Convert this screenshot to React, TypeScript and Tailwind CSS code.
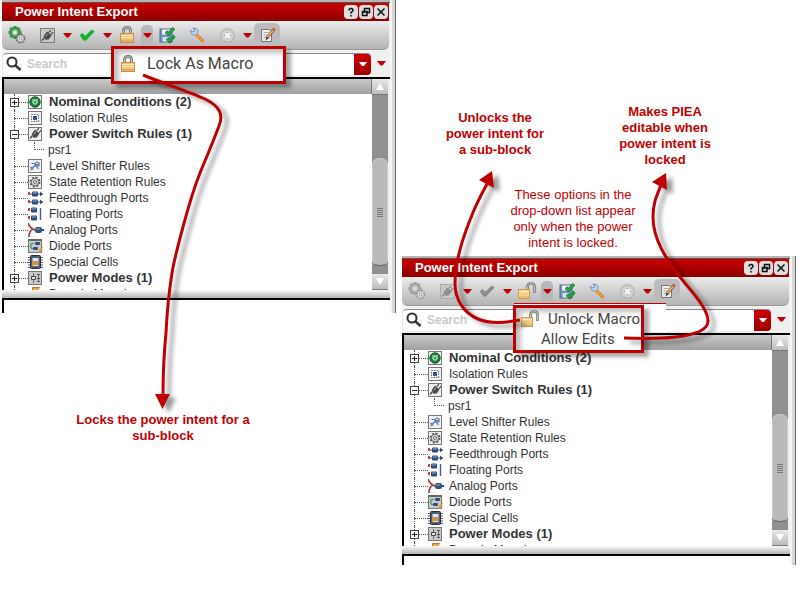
import React from "react";

type IconProps = { muted?: boolean };

function Gears({ muted }: IconProps) {
  return (
    <svg className="size-[18px]" viewBox="0 0 18 18" aria-hidden="true">
      <path d="M5.500 0h3l.5 1.500 1.800-.6 1.800 1.800-.8 1.600 1.700.7v3l-1.700.6.8 1.600-1.800 1.800-1.800-.8-.5 1.800h-3L5 11.200l-1.800.8-1.900-1.800.9-1.600L.5 8V5l1.700-.7-.9-1.600L3.200.9 5 1.500z" fill={muted ? "#a2a2a2" : "#3c8f4d"} />
      <circle cx="7" cy="6.500" r="3.600" fill={muted ? "#bcbcbc" : "#6ab878"} />
      <circle cx="7" cy="6.500" r="2" fill={muted ? "#dcdcdc" : "#e4eee4"} />
      <circle cx="12.500" cy="12.500" r="4" fill="none" stroke={muted ? "#9a9a9a" : "#6d6d6d"} strokeWidth="2" strokeDasharray="1.800 1.340" />
      <circle cx="12.500" cy="12.500" r="3.600" fill="#dedede" stroke={muted ? "#a2a2a2" : "#7d7d7d"} strokeWidth=".8" />
      <circle cx="12.500" cy="12.500" r="1.400" fill="#fff" stroke="#888" strokeWidth=".8" />
    </svg>
  );
}

function Plug({ muted }: IconProps) {
  const c = muted ? "#8c8c8c" : "#4a4a4a";
  return (
    <g>
      <path d="M2 12.500 4.500 9.500" stroke={c} strokeWidth="1.400" />
      <path d="M3.600 8 7 3.600l4.600 3.800-3 4-3.200.4z" fill={c} />
      <path d="M8.500 4.600 11 2.200M10.800 6.600l2.400-2.300" stroke={c} strokeWidth="1.200" />
      <path d="M5.800 8.400 8 5.600" stroke="#aaa" strokeWidth="1" />
    </g>
  );
}

function PlugTool({ muted }: IconProps) {
  return (
    <svg className="size-[15px]" viewBox="0 0 15 15" aria-hidden="true">
      <rect x=".5" y=".5" width="14" height="14" fill="#c9c9c9" stroke={muted ? "#aaa" : "#7d7d7d"} />
      <Plug muted={muted} />
    </svg>
  );
}

function Check({ muted }: IconProps) {
  return (
    <svg className="size-4" viewBox="0 0 16 16" aria-hidden="true">
      <path d="M.8 8.600 3.200 6 6.200 8.800 13 2.600 15.600 4.600 6.800 13.800 4.400 13.400z" fill={muted ? "#8b8b8b" : "#12b32a"} />
    </svg>
  );
}

function Lock({ open }: { open?: boolean }) {
  return open ? (
    <svg className="h-[18px] w-[20px] shrink-0" viewBox="0 0 20 18" aria-hidden="true">
      <path d="M10.500 9V4.500q0-3 3.500-3t3.500 3V11" fill="none" stroke="#777" strokeWidth="2.600" />
      <path d="M10.500 8.500V4.500q0-3 3.500-3t3.500 3v6" fill="none" stroke="#c4c4c4" strokeWidth="1" />
      <rect x="1.500" y="7.500" width="11" height="9" fill="#f3cf8c" stroke="#d49b4b" />
      <path d="M2 9.500h10" stroke="#fff0c8" />
      <path d="M2 15h10" stroke="#e2ac5b" />
    </svg>
  ) : (
    <svg className="h-[18px] w-[16px] shrink-0" viewBox="0 0 16 18" aria-hidden="true">
      <path d="M4.500 9V4.500q0-3 3.500-3t3.500 3V9" fill="none" stroke="#777" strokeWidth="2.800" />
      <path d="M4.500 9V4.500q0-3 3.500-3t3.500 3V9" fill="none" stroke="#c8c8c8" strokeWidth="1" />
      <rect x="1.500" y="7.500" width="13" height="9" fill="#f3c078" stroke="#cf8c43" />
      <path d="M2 9.500h12M2 11.500h12" stroke="#ffe9bd" />
      <path d="M2 15h12" stroke="#e09a45" />
    </svg>
  );
}

function Save() {
  return (
    <svg className="size-[18px]" viewBox="0 0 18 18" aria-hidden="true">
      <rect x="2" y="3" width="12" height="13" fill="#6f93bf" stroke="#4b6d97" />
      <rect x="4" y="3.500" width="8" height="5" fill="#eef3f8" />
      <rect x="4.500" y="11" width="6" height="4.500" fill="#d9e3ef" />
      <path d="M8 5.500 10.500 8 16 2.200M9 12.500l2.500 2.600 5-5.300" fill="none" stroke="#12792b" strokeWidth="3.200" />
      <path d="M8 5.500 10.500 8 16 2.200M9 12.500l2.500 2.600 5-5.300" fill="none" stroke="#31b34e" strokeWidth="1.400" />
    </svg>
  );
}

function Wrench() {
  return (
    <svg className="size-4" viewBox="0 0 16 16" aria-hidden="true">
      <path d="M7.500 7.800 13.400 13.600" stroke="#d76a14" strokeWidth="3" strokeLinecap="round" />
      <path d="M7.500 7.800 13.200 13.400" stroke="#ffa645" strokeWidth="1.400" strokeLinecap="round" />
      <path d="M1.600 3.200 3.800 5l1.600-.6.4-1.800L3.800 1.400l3-.2 2 2.400-.2 2.400-2.200 2.200-2.600-.4-2-2z" fill="#c6d8ef" stroke="#5f86b8" strokeWidth=".9" />
    </svg>
  );
}

function Cancel() {
  return (
    <svg className="size-[15px]" viewBox="0 0 15 15" aria-hidden="true">
      <circle cx="7.500" cy="7.500" r="6.700" fill="#d2d2d2" stroke="#a9a9a9" />
      <path d="m5 5 5 5m0-5-5 5" stroke="#b0b0b0" strokeWidth="3.400" />
      <path d="m5 5 5 5m0-5-5 5" stroke="#fff" strokeWidth="2" />
    </svg>
  );
}

function EditPage() {
  return (
    <svg className="size-[17px]" viewBox="0 0 17 17" aria-hidden="true">
      <path d="M2.500 2.500h8l2 2v10h-10z" fill="#eee" stroke="#777" />
      <path d="M4.500 5.500h5M4.500 8h4M4.500 10.500h3" stroke="#aaa" />
      <path d="M14.600 2.600 7.600 11.400" stroke="#784b20" strokeWidth="3" />
      <path d="M14 3.200 7.800 11" stroke="#f3b75f" strokeWidth="1.800" />
      <path d="m15.800 1.200-1.400 1.700" stroke="#cf5c5c" strokeWidth="3" />
      <path d="m7.800 9.600-1.400 3.800 3.200-2.200z" fill="#333" />
    </svg>
  );
}

function Caret() {
  return (
    <svg className="h-[5px] w-[9px]" viewBox="0 0 9 5" aria-hidden="true">
      <path d="M0 0h9L5.500 4.500h-2z" fill="#c00000" />
    </svg>
  );
}

function Tool({ label, className = "", children }: { label: string; className?: string; children: React.ReactNode }) {
  return (
    <button aria-label={label} className={`flex h-5 w-5 shrink-0 items-center justify-center ${className}`}>
      {children}
    </button>
  );
}

const frame = <rect x=".5" y="1.500" width="13" height="13" fill="#f1f1f1" stroke="#777" />;

function port(x: number, y: number) {
  return (
    <g>
      <rect x={x} y={y} width="6" height="5" rx="1" fill="#2f4c7c" />
      <path d={`M${x + 1} ${y + 1.5}h4`} stroke="#8fa9cf" />
    </g>
  );
}

const glyphs: Record<string, React.ReactNode> = {
  nominal: (
    <g>
      {frame}
      <circle cx="7" cy="8" r="5.200" fill="#188238" stroke="#0c5a24" />
      <path d="M5 5v3.500q2 3.400 4 0V5M7 5v3" stroke="#dff5df" fill="none" strokeWidth="1.100" />
    </g>
  ),
  isolation: (
    <g>
      {frame}
      <rect x="3.500" y="4.500" width="7" height="7" fill="#fff" stroke="#5f7093" strokeDasharray="1.500 1" />
      <rect x="5" y="6" width="4" height="4" fill="#34528a" />
    </g>
  ),
  plug: (
    <g>
      {frame}
      <Plug />
    </g>
  ),
  level: (
    <g>
      {frame}
      <path d="M2.500 12 8.500 6M3.500 5.500h3l4 5.500M11 4.500v3l-3 1M2.500 9l3 2.500" fill="none" stroke="#4770b5" strokeWidth="1.200" />
      <circle cx="9" cy="5.500" r="1.500" fill="none" stroke="#4770b5" />
    </g>
  ),
  retention: (
    <g>
      {frame}
      <circle cx="7" cy="8" r="4.600" fill="none" stroke="#555" strokeWidth="1.800" strokeDasharray="2 1.610" />
      <circle cx="7" cy="8" r="3.800" fill="#ddd" stroke="#666" />
      <circle cx="7" cy="8" r="1.500" fill="#fff" stroke="#666" />
    </g>
  ),
  feedthrough: (
    <g>
      <path d="M0 4h15M0 12h15" stroke="#2f4c7c" />
      <path d="M0 2h2v3H0zM0 10h2v3H0z" fill="#cc4040" />
      {port(4, 1.5)}
      {port(4, 9.5)}
      <path d="m12 1.500 3 2.500-3 2.500zM12 9.500l3 2.500-3 2.500z" fill="#2f4c7c" />
    </g>
  ),
  floating: (
    <g>
      <path d="M0 2h2v3H0zM0 10h2v3H0z" fill="#cc4040" />
      {port(3, 1.5)}
      {port(3, 9.5)}
      <path d="M12.500 2v12" stroke="#3a5f9b" strokeWidth="1.400" />
    </g>
  ),
  analog: (
    <g>
      <path d="M0 1q1 4 5 6-4 2-4 8M5 7l2 1h3" fill="none" stroke="#a84444" strokeWidth="1.800" />
      <rect x="7" y="5" width="7" height="6" rx="2" fill="#34537e" />
      <path d="M8 7h4" stroke="#9bb2d0" />
      <path d="M13 8h3" stroke="#34537e" strokeWidth="2" />
    </g>
  ),
  diode: (
    <g>
      <rect x=".5" y="2.500" width="13" height="12" fill="#c9c9c9" stroke="#777" />
      <path d="M0 2h14" stroke="#666" strokeWidth="2" />
      <path d="M6 5.500H3.500L2.500 8l1 2.500H5" fill="none" stroke="#2fa344" strokeWidth="1.200" />
      <rect x="7" y="4" width="5" height="3" rx="1" fill="#2f4c7c" />
      <rect x="5" y="9" width="5" height="3" rx="1" fill="#2f4c7c" />
      <path d="m14.500 9-4 5.500" stroke="#e09a35" strokeWidth="1.600" />
    </g>
  ),
  special: (
    <g>
      <path d="M0 3.500h15M0 6h15M0 8.500h15M0 11h15M0 13.500h15" stroke="#555" />
      <rect x="2.500" y="1.500" width="10" height="13" rx="1" fill="#4b5e78" stroke="#333" />
      <rect x="4.500" y="4" width="6" height="8" fill="#dfe5ee" />
      <rect x="5" y="7" width="5" height="4" fill="#ea8a26" />
    </g>
  ),
  modes: (
    <g>
      <rect x=".5" y="1.500" width="13" height="13" fill="#c9c9c9" stroke="#777" />
      <path d="M5.500 3v10M10.500 4v8" stroke="#666" />
      <path d="M3.500 6.500h4v3h-4z" fill="#e6e6e6" stroke="#444" />
      <path d="M9 4.500h3M9 8.500h3M9 11.500h3" stroke="#555" />
    </g>
  ),
  domain: <path d="M4.500 1.500h7l-3 4v8h-2V6.500h-2z" fill="#f0ad45" stroke="#b9781f" />,
};

type Row = { icon: string; label: string; bold?: boolean; state?: "plus" | "minus"; child?: string };

const rows: Row[] = [
  { icon: "nominal", label: "Nominal Conditions (2)", bold: true, state: "plus" },
  { icon: "isolation", label: "Isolation Rules" },
  { icon: "plug", label: "Power Switch Rules (1)", bold: true, state: "minus", child: "psr1" },
  { icon: "level", label: "Level Shifter Rules" },
  { icon: "retention", label: "State Retention Rules" },
  { icon: "feedthrough", label: "Feedthrough Ports" },
  { icon: "floating", label: "Floating Ports" },
  { icon: "analog", label: "Analog Ports" },
  { icon: "diode", label: "Diode Ports" },
  { icon: "special", label: "Special Cells" },
  { icon: "modes", label: "Power Modes (1)", bold: true, state: "plus" },
  { icon: "domain", label: "Domain Mapping" },
];

function Tree() {
  return (
    <ul className="h-[196px] flex-1 overflow-hidden bg-white pl-[9px] text-[12px] leading-4 text-[#333]">
      {rows.map((row) => (
        <li key={row.label} className="relative">
          <span className="absolute top-0 bottom-0 left-[1px] w-0 border-l border-dotted border-[#555]" />
          <div className="relative flex h-4 items-center">
            <span className="flex w-[15px] items-center">
              {row.state ? (
                <button
                  aria-label={`Toggle ${row.label}`}
                  className="-ml-[3px] flex size-[9px] shrink-0 items-center justify-center border border-[#444] bg-white"
                >
                  <svg className="size-[5px]" viewBox="0 0 5 5" aria-hidden="true">
                    <path d={row.state === "plus" ? "M0 2.500h5M2.500 0v5" : "M0 2.500h5"} stroke="#222" />
                  </svg>
                </button>
              ) : (
                <span className="w-[1px]" />
              )}
              <span className="h-0 flex-1 border-t border-dotted border-[#555]" />
            </span>
            <svg className="size-4 shrink-0" viewBox="0 0 16 16" aria-hidden="true">
              {glyphs[row.icon]}
            </svg>
            <span className={row.bold ? "ml-[5px] text-[13px] font-bold whitespace-nowrap" : "ml-[5px] whitespace-nowrap"}>{row.label}</span>
          </div>
          {row.child && (
            <ul>
              <li className="flex h-4 items-start pl-[21px]">
                <span className="mr-1 h-2 w-[10px] border-b border-l border-dotted border-[#555]" />
                {row.child}
              </li>
            </ul>
          )}
        </li>
      ))}
    </ul>
  );
}

function WindowButton({ label, children }: { label: string; children: React.ReactNode }) {
  return (
    <button aria-label={label} className="flex size-[14px] items-center justify-center rounded-[4px] bg-[#dedede]">
      <svg className="size-[10px]" viewBox="0 0 10 10" fill="none" stroke="#111" strokeWidth="1.500" aria-hidden="true">
        {children}
      </svg>
    </button>
  );
}

function ExportPanel({ locked, children }: { locked?: boolean; children: React.ReactNode }) {
  return (
    <section className="relative flex pl-[2px]">
      <div className="min-w-0 flex-1 bg-[#f0f0f0]">
        <div className="h-[3px] border-b border-[#555] bg-[#b5b5b5]" />
        <header className="mr-[1px] flex h-[18px] items-center bg-linear-to-b from-[#cc0000] to-[#8c0000] pr-[1px] pl-[13px]">
          <h2 className="flex-1 text-[13px] leading-4 font-bold text-white">Power Intent Export</h2>
          <div className="flex gap-[1px]">
            <WindowButton label="Help">
              <path d="M3 3.500q0-2 2-2t2 1.800q0 1-2 2v1.500M5 8v1.500" />
            </WindowButton>
            <WindowButton label="Float">
              <path d="M3.500 4V1.500h5v4H6M1.500 4.500H6v4H1.500zM1.500 5H6" />
            </WindowButton>
            <WindowButton label="Close">
              <path d="m1.500 1.500 7 7m0-7-7 7" />
            </WindowButton>
          </div>
        </header>
        <div className="mr-[1px] flex h-[29px] items-center rounded-br-[6px] rounded-bl-[6px] border-b border-[#999] bg-linear-to-b from-[#ececec] to-[#b4b4b4] pl-[5px]">
          <Tool label="Settings"><Gears muted={locked} /></Tool>
          <Tool label="Generate" className="ml-[10px]"><PlugTool muted={locked} /></Tool>
          <Tool label="Generate options"><Caret /></Tool>
          <Tool label="Check"><Check muted={locked} /></Tool>
          <Tool label="Check options"><Caret /></Tool>
          <Tool label={locked ? "Unlock" : "Lock"}><Lock open={locked} /></Tool>
          <Tool label="Lock options">
            <span className="flex h-5 w-3 items-center justify-center rounded-t-[5px] bg-[#b8b8b8]"><Caret /></span>
          </Tool>
          <Tool label="Save"><Save /></Tool>
          <Tool label="Tools" className="ml-[10px]"><Wrench /></Tool>
          <Tool label="Cancel" className="ml-[10px]"><Cancel /></Tool>
          <Tool label="Cancel options"><Caret /></Tool>
          <button aria-label="Edit" className="-ml-[3px] flex h-6 w-[26px] items-center justify-center rounded-[5px] bg-[#bcbcbc]"><EditPage /></button>
        </div>
        <div className="flex h-[27px] items-center">
          <label className="mr-[6px] ml-[1px] flex h-[22px] min-w-0 flex-1 items-center rounded-[4px] border-t border-[#888] bg-white">
            <svg className="mx-[3px] size-4" viewBox="0 0 16 16" fill="none" stroke="#333" aria-hidden="true">
              <circle cx="6" cy="6" r="4.500" strokeWidth="2" />
              <path d="m9.500 9.500 5 4.500" strokeWidth="2.400" />
            </svg>
            <input
              aria-label="Search"
              placeholder="Search"
              className="ml-[2px] min-w-0 flex-1 text-[12px] leading-4 font-bold outline-none placeholder:text-[#c8c8c8]"
            />
            <button aria-label="Search history" className="flex h-[21px] w-[17px] items-center justify-center rounded-r-[4px] bg-linear-to-b from-[#cc0000] to-[#9c0000]">
              <svg className="h-1 w-2" viewBox="0 0 8 4" aria-hidden="true"><path d="M0 0h8L5 4H3z" fill="#fff" /></svg>
            </button>
          </label>
          <button aria-label="Search options" className="mr-[4px]"><Caret /></button>
        </div>
        <div className="border-t-2 border-l-2 border-black bg-white">
          <div className="flex">
            <div className="min-w-0 flex-1">
              <div className="h-[15px] border-r border-[#777] bg-linear-to-b from-[#cacaca] to-[#a0a0a0]" />
              <div className="flex"><Tree /></div>
            </div>
            <div className="flex w-4 flex-col bg-[#909090]">
              <button aria-label="Scroll up" className="flex h-4 items-center justify-center border-b border-[#777] bg-linear-to-b from-[#e8e8e8] to-[#bdbdbd]">
                <svg className="h-[7px] w-2" viewBox="0 0 8 7" aria-hidden="true"><path d="M4 0 8 7H0z" fill="#fff" /></svg>
              </button>
              <div className="flex flex-1 flex-col justify-end pb-2">
                <div className="flex h-[108px] flex-col items-center justify-center gap-[1px] rounded-[7px] border border-[#ccc] border-b-[#666] bg-[#bababa]">
                  <span className="h-[1px] w-[6px] bg-[#777]" />
                  <span className="h-[1px] w-[6px] bg-[#777]" />
                  <span className="h-[1px] w-[6px] bg-[#777]" />
                  <span className="h-[1px] w-[6px] bg-[#777]" />
                  <span className="h-[1px] w-[6px] bg-[#777]" />
                </div>
              </div>
              <button aria-label="Scroll down" className="flex h-4 items-center justify-center border-b border-[#777] bg-linear-to-b from-[#e8e8e8] to-[#bdbdbd]">
                <svg className="h-[7px] w-2" viewBox="0 0 8 7" aria-hidden="true"><path d="M4 7 8 0H0z" fill="#fff" /></svg>
              </button>
            </div>
            <div className="w-[2px] bg-[#f0f0f0]" />
          </div>
        </div>
        <div className="h-2 bg-linear-to-b from-[#fafafa] to-[#b5b5b5]" />
        <div className={locked ? "h-[11px] border-t-2 border-l-2 border-black bg-white" : "h-[15px] border-t-2 border-l-2 border-black bg-white"} />
      </div>
      <div className="w-[6px] border-r border-l-2 border-r-[#666] border-l-[#f5f5f5] bg-[#d8d8d8]" />
      <div className="w-1" />
      {children}
    </section>
  );
}

const item = "flex items-center whitespace-nowrap font-['Roboto',Arial,sans-serif] leading-5 text-[#444]";
const callout = "absolute border-3 border-[#c00000] bg-white shadow-[5px_4px_4px_rgba(0,0,0,0.35),inset_5px_4px_5px_rgba(0,0,0,0.25)]";
const arrows = "pointer-events-none absolute top-0 left-0 h-full w-[400px] overflow-visible drop-shadow-[6px_4px_2px_rgba(0,0,0,0.4)]";

export default function App() {
  return (
    <main className="grid min-h-screen grid-cols-2 bg-white font-['Liberation_Sans',Arial,sans-serif]">
      <div className="relative">
        <ExportPanel>
          <div className={`${callout} top-[46px] left-[111px] h-[38px] w-[175px]`}>
            <button className={`${item} h-full gap-[11px] pb-[2px] pl-[6px] text-[16px]`}><Lock />Lock As Macro</button>
          </div>
        </ExportPanel>
        <p className="mt-[99px] ml-[68px] w-[190px] text-center text-[13px] leading-4 font-bold text-[#c00000]">Locks the power intent for a sub-block</p>
        <svg className={arrows} aria-hidden="true">
          <path
            d="M143 75C165 84 190 92 205 99C219 106 224 114 219 126C213 142 207 156 200 173C192 193 187 212 183 227C178 246 174 260 172 273C169 292 167 312 166 333C164 353 163 373 163 396"
            fill="none"
            stroke="#c00000"
            strokeWidth="3"
          />
          <path d="M155 394h15l-7.500 15z" fill="#c00000" />
        </svg>
      </div>
      <div className="relative">
        <div className="flex h-[168px] pt-[104px] text-center text-[13px] leading-4 font-bold text-[#c00000]">
          <p className="mt-[6px] ml-[40px] w-[110px]">Unlocks the power intent for a&nbsp;sub-block</p>
          <p className="ml-[62px] w-[106px]">Makes PIEA editable when power intent is locked</p>
        </div>
        <p className="mt-[19px] mb-[5px] ml-[105px] w-[136px] text-center text-[13px] leading-4 text-[#c00000]">
          These options in the drop-down list appear only when the power intent is locked.
        </p>
        <ExportPanel locked>
          <div className="absolute top-[47px] left-[114px] h-[29px] w-[152px] border-t border-[#c00000] bg-white" />
          <div className={`${callout} top-[49px] left-[113px] h-[48px] w-[131px]`}>
            <button className={`${item} mt-[1px] gap-2 pl-[4px] text-[15px]`}><Lock open />Unlock Macro</button>
            <button className={`${item} pl-[25px] text-[15px]`}>Allow Edits</button>
          </div>
        </ExportPanel>
        <svg className={arrows} aria-hidden="true">
          <path d="M120 320C105 323 90 324 78 319C64 313 55 300 55 283C55 262 64 235 70 220C76 204 81 195 87 184" fill="none" stroke="#c00000" strokeWidth="3" />
          <path d="M92 171 94 188 79 180z" fill="#c00000" />
          <path d="M224 338C250 339 308 340 308 321C308 308 290 290 280 277C267 260 253 240 253 217C253 203 257 195 261 185" fill="none" stroke="#c00000" strokeWidth="3" />
          <path d="M266 173 267 190 252 182z" fill="#c00000" />
        </svg>
      </div>
    </main>
  );
}
